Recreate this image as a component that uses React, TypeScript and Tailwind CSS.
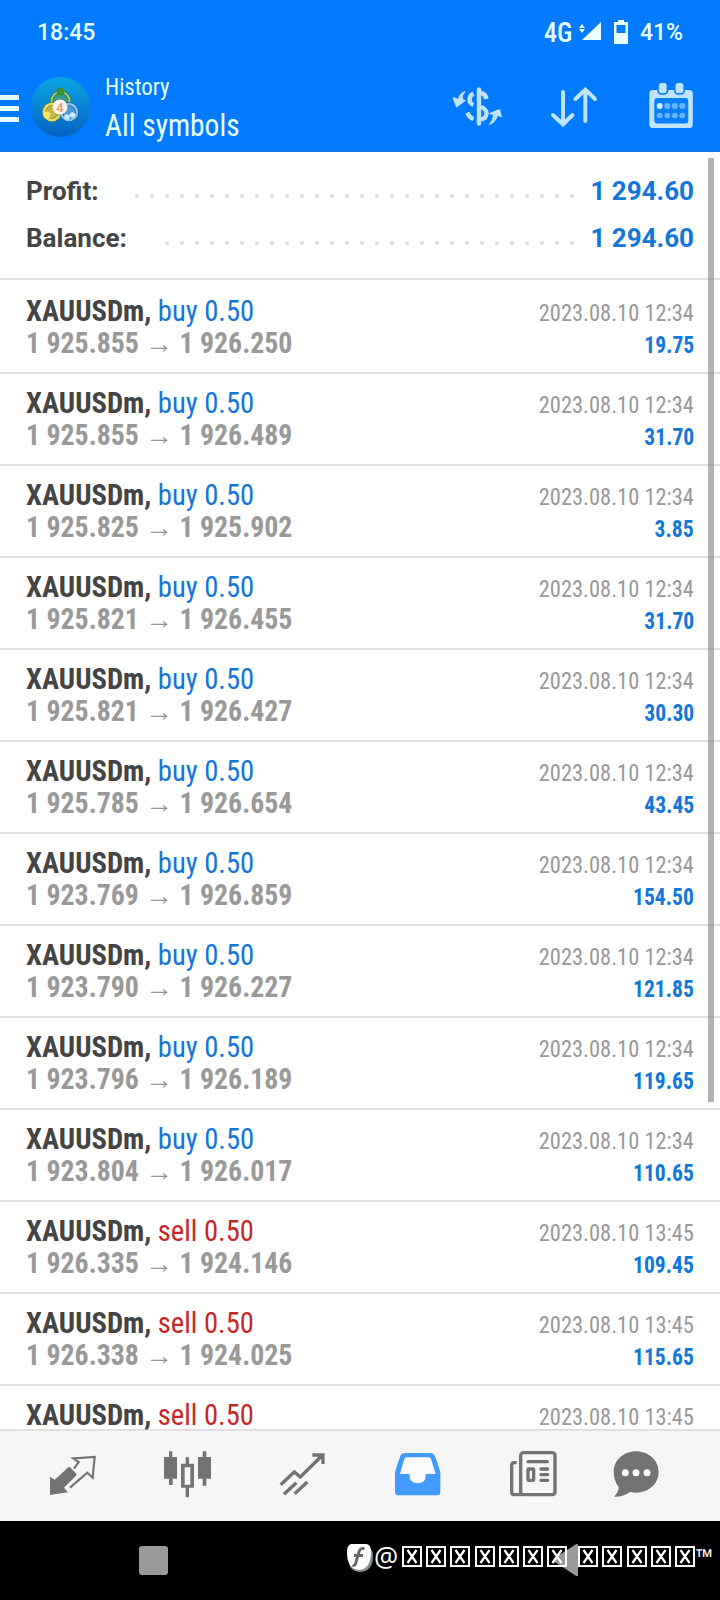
import { FunctionComponent } from "react";

type Deal = {
  side: "buy" | "sell";
  open: string;
  close: string;
  time: string;
  profit: string;
};

const deals: Deal[] = [
  { side: "buy", open: "1 925.855", close: "1 926.250", time: "2023.08.10 12:34", profit: "19.75" },
  { side: "buy", open: "1 925.855", close: "1 926.489", time: "2023.08.10 12:34", profit: "31.70" },
  { side: "buy", open: "1 925.825", close: "1 925.902", time: "2023.08.10 12:34", profit: "3.85" },
  { side: "buy", open: "1 925.821", close: "1 926.455", time: "2023.08.10 12:34", profit: "31.70" },
  { side: "buy", open: "1 925.821", close: "1 926.427", time: "2023.08.10 12:34", profit: "30.30" },
  { side: "buy", open: "1 925.785", close: "1 926.654", time: "2023.08.10 12:34", profit: "43.45" },
  { side: "buy", open: "1 923.769", close: "1 926.859", time: "2023.08.10 12:34", profit: "154.50" },
  { side: "buy", open: "1 923.790", close: "1 926.227", time: "2023.08.10 12:34", profit: "121.85" },
  { side: "buy", open: "1 923.796", close: "1 926.189", time: "2023.08.10 12:34", profit: "119.65" },
  { side: "buy", open: "1 923.804", close: "1 926.017", time: "2023.08.10 12:34", profit: "110.65" },
  { side: "sell", open: "1 926.335", close: "1 924.146", time: "2023.08.10 13:45", profit: "109.45" },
  { side: "sell", open: "1 926.338", close: "1 924.025", time: "2023.08.10 13:45", profit: "115.65" },
];

const StatusBar: FunctionComponent = () => (
  <div className="flex h-[62px] items-center justify-between px-[37px] pt-[4px] text-[23px] font-medium text-[#e8ffff]">
    <span>18:45</span>
    <div className="flex items-center">
      <span className="origin-right scale-x-[.97] text-[27px] font-stretch-condensed">4G</span>
      <svg className="mb-[2px] ml-[6px] h-[22px] w-[24px]" viewBox="0 0 24 22" fill="currentColor">
        <path d="M23 1v18H4z" />
        <path d="M4 3l3 4H1zM4 12l3-4H1z" />
      </svg>
      <svg className="mb-[3px] ml-[11px] h-[26px] w-[16px]" viewBox="0 0 16 26">
        <path d="M5 1h6v2h4v22H1V3h4z" fill="currentColor" />
        <path d="M3.500 6h9v8h-9z" fill="#007aff" />
      </svg>
      <span className="ml-[11px]">41%</span>
    </div>
  </div>
);

const Logo: FunctionComponent = () => (
  <svg className="ml-[11px] mt-[14px] h-[62px] w-[62px]" viewBox="0 0 62 62">
    <defs>
      <linearGradient id="logoBg" x1="0" y1="0" x2="0" y2="1">
        <stop offset="0" stopColor="#08a5e4" />
        <stop offset="1" stopColor="#0562c4" />
      </linearGradient>
    </defs>
    <circle cx="30.500" cy="31" r="30" fill="url(#logoBg)" />
    <circle cx="30.500" cy="25" r="9" fill="#3a9a86" stroke="#2f7d5a" strokeWidth="4" />
    <circle cx="30.500" cy="25" r="9" fill="none" stroke="#9ccf92" strokeWidth="2" />
    <circle cx="22" cy="36" r="8" fill="#c9b544" stroke="#5f8a4a" strokeWidth="4" />
    <circle cx="22" cy="36" r="8" fill="none" stroke="#efdc5c" strokeWidth="2.500" />
    <circle cx="39" cy="36" r="8" fill="#4a9ad8" stroke="#1a5f9e" strokeWidth="4" />
    <circle cx="39" cy="36" r="8" fill="none" stroke="#86c6ee" strokeWidth="2.500" />
    <circle cx="30.500" cy="15.500" r="4" fill="#3c8f3a" />
    <circle cx="17" cy="39" r="3.500" fill="#f3e36a" />
    <circle cx="37" cy="41" r="2.800" fill="#cdeaff" />
    <circle cx="42.500" cy="39" r="2.800" fill="#cdeaff" />
    <circle cx="30" cy="31" r="7.500" fill="#fff4ee" />
    <text x="30" y="36" textAnchor="middle" fontSize="13" fontWeight="600" fill="#eaa06a">
      4
    </text>
  </svg>
);

const dotXs = [659.7, 667.3, 674.8, 682.3];

const Header: FunctionComponent = () => (
  <div className="flex h-[89px] text-[#e8ffff]">
    <div className="mt-[33px] flex w-[19px] flex-col gap-[6px]">
      <div className="h-[5px] bg-current" />
      <div className="h-[5px] bg-current" />
      <div className="h-[5px] bg-current" />
    </div>
    <Logo />
    <div className="ml-[13px] flex flex-1 flex-col items-start font-stretch-condensed">
      <span className="mt-[11px] origin-left scale-x-[.95] text-[24px] leading-[28px]">History</span>
      <span className="origin-left scale-x-[.92] text-[32px] leading-[48px]">All symbols</span>
    </div>
    <div className="mr-[24px] flex pt-[20px] text-[#bfe3fb]">
      <svg className="h-[48px] w-[50px]" viewBox="452 82 50 48" fill="none" stroke="currentColor">
        <path d="M479 89.500v34" strokeWidth="4.400" strokeLinecap="round" />
        <path d="M481 93q4.500 1 5.500 6M481 107q5.500 2 5.500 6.500t-5.500 6" strokeWidth="4.400" />
        <path d="M473.500 93.500q-4 2-4 6t4 5.500M467.500 112.500q1.500 5 6 6.500" strokeWidth="4.400" />
        <path d="M465 91.500q-6 2-6.500 8l-5.500-2 3.500 9.500 9-6.500-3-1q-1-4 2.500-8z" fill="currentColor" />
        <path d="M489.500 124.500q7-3 8-9.500l4 2-2-7.500-10 4 4 1q0 5-4 10z" fill="currentColor" />
      </svg>
      <svg
        className="ml-[48px] h-[48px] w-[48px]"
        viewBox="550 82 48 48"
        fill="none"
        stroke="currentColor"
        strokeWidth="4"
        strokeLinecap="round"
      >
        <path d="M563 92v32M553 115l10 9.500 9.500-9.500M585.300 121V89.500M575.500 99l9.800-9.500 9.700 9.500" />
      </svg>
      <svg className="ml-[50px] h-[48px] w-[48px]" viewBox="648 82 48 48">
        <rect x="649.300" y="90" width="43.500" height="38" rx="3.500" fill="currentColor" />
        <rect x="654.300" y="98" width="34" height="25.500" rx="3" fill="#0a7ffb" />
        <rect x="658" y="82.300" width="9.500" height="11.700" rx="3.500" fill="currentColor" stroke="#007aff" strokeWidth="1.600" />
        <rect x="674.700" y="82.300" width="9.500" height="11.700" rx="3.500" fill="currentColor" stroke="#007aff" strokeWidth="1.600" />
        {dotXs.map((x, i) => (
          <g key={x} fill="#6db5fb">
            <circle cx={x} cy="106" r="3" fill={i === 0 ? "#d5efff" : "#6db5fb"} />
            <circle cx={x} cy="115.500" r="2.800" />
          </g>
        ))}
      </svg>
    </div>
  </div>
);

const SummaryLine: FunctionComponent<{ label: string; dots: number }> = ({ label, dots }) => (
  <div className="flex h-[47px] items-center text-[26px] font-bold">
    <span className="text-[#444]">{label}</span>
    <div className="ml-auto mr-[16px] mt-[8px] flex gap-[11px]">
      {Array.from({ length: dots }, (_, i) => (
        <div key={i} className="size-[4px] rounded-full bg-[#dcdcdc]" />
      ))}
    </div>
    <span className="text-[#1276da]">1 294.60</span>
  </div>
);

const DealTitle: FunctionComponent<{ side: Deal["side"]; time: string }> = ({ side, time }) => (
  <div className="flex h-[32px] items-baseline justify-between leading-[32px]">
    <span className="origin-left scale-x-[.986] text-[29px]">
      <b className="text-[#444]">XAUUSDm,</b>{" "}
      <span className={side === "buy" ? "text-[#1276da]" : "text-[#c62828]"}>{side} 0.50</span>
    </span>
    <span className="origin-right scale-x-[.935] text-[24px] text-[#999]">{time}</span>
  </div>
);

const DealRow: FunctionComponent<{ deal: Deal }> = ({ deal }) => (
  <div className="h-[92px] border-b-2 border-[#e0e0e0] px-[26px] pt-[13px] font-stretch-condensed">
    <DealTitle side={deal.side} time={deal.time} />
    <div className="flex h-[32px] items-baseline justify-between leading-[32px]">
      <span className="origin-left scale-x-[.959] text-[29px] font-bold text-[#999]">
        {deal.open} → {deal.close}
      </span>
      <span className="origin-right scale-x-[.937] text-[23px] font-bold text-[#1276da]">{deal.profit}</span>
    </div>
  </div>
);

const TabBar: FunctionComponent = () => (
  <div className="flex h-[92px] border-t-2 border-[#e0e0e0] bg-[#f6f6f6] pl-[48px] pt-[19px] text-[#737373]">
    <svg className="size-[48px]" viewBox="144 240 144 144">
      <path d="M150 320l14 9 42-38q3-1 6 2l17 18q2 3-1 6l-36 36 12 14-54 8z" fill="currentColor" />
      <path d="M222 296l14-20-16-11 64-4-6 62-16-15-52 45" fill="none" stroke="currentColor" strokeWidth="6.500" />
    </svg>
    <svg className="ml-[67px] size-[48px]" viewBox="489 240 144 144" fill="currentColor">
      <path d="M507 244h10v17h14v65h-13v19h-11v-19h-15v-65h15zM608 244h11v17h14v65h-14v21h-11v-21h-14v-65h14z" />
      <path
        fillRule="evenodd"
        d="M557 262h10v19h15v72h-15v29h-10v-29h-14v-72h14zM554 292v52h17v-52z"
      />
    </svg>
    <svg className="ml-[68px] size-[48px]" viewBox="837 240 144 144" fill="none" stroke="currentColor" strokeWidth="10">
      <path d="M842 344l41-38 18 15 67-66M937 255h32v27M852 373l37-35M884 371l38-35" />
    </svg>
    <svg className="ml-[67px] size-[48px] text-[#449bff]" viewBox="102 240 144 144">
      <path
        fill="currentColor"
        d="M134 249h78q9 0 13 8l14 42q2 6 2 12v56q0 9-9 9H114q-9 0-9-9v-56q0-6 2-12l14-42q4-8 13-8z"
      />
      <path fill="#fafafa" d="M140 262h66q5 0 7 5l14 45h-30v6q0 22-24 22t-24-22v-6h-29l13-45q2-5 7-5z" />
    </svg>
    <svg className="ml-[67px] size-[48px]" viewBox="447 240 144 144" fill="none" stroke="currentColor" strokeWidth="10">
      <rect x="482" y="248" width="103" height="126" rx="8" />
      <path d="M470 278h-7q-8 0-8 8v79q0 9 9 9h22" />
      <path d="M504 275h58M543 297h20M543 314h20M543 331h20" strokeLinecap="round" />
      <rect x="504" y="297" width="17" height="34" rx="2" />
    </svg>
    <svg className="ml-[56px] size-[48px]" viewBox="759 240 144 144">
      <path
        fill="currentColor"
        d="M828 244c38 0 68 27 68 62s-30 62-68 62q-10 0-18-2-20 15-48 14 14-13 14-29-15-19-15-45c0-35 29-62 67-62z"
      />
      <g fill="#fafafa">
        <circle cx="796" cy="308" r="10.500" />
        <circle cx="828" cy="308" r="10.500" />
        <circle cx="861" cy="308" r="10.500" />
      </g>
    </svg>
  </div>
);

const Tofu: FunctionComponent = () => (
  <svg className="h-[21px] w-[20px]" viewBox="0 0 20 21" fill="none" stroke="#fff">
    <rect x="1" y="1" width="18" height="19" strokeWidth="2" />
    <path d="M5.500 4l9 13M14.500 4l-9 13" strokeWidth="2.200" />
  </svg>
);

const SystemBar: FunctionComponent = () => (
  <div className="relative flex h-[79px] bg-black">
    <div className="ml-[139px] mt-[25px] size-[29px] rounded-[3px] bg-[#999]" />
    <svg className="ml-[382px] mt-[22px] h-[34px] w-[30px]" viewBox="0 0 30 34">
      <path d="M28 1.500v31q-1 1-2.500 0L4 18.500q-2-1.500 0-3L25.500 1.500q1.500-1 2.500 0z" fill="#999" />
    </svg>
    {/* watermark lies over the navigation buttons */}
    <div className="absolute left-[346px] top-[22px] flex text-white">
      <svg className="h-[30px] w-[28px]" viewBox="0 0 28 30">
        <path d="M4 5h19q4 1 4 8 0 16-14 16Q4 28 3 20z" fill="#8a8a8a" />
        <path d="M5 1h15q5 0 5 8 0 17-12 18Q1 26 1 9q0-7 4-8z" fill="#fff" />
        <path d="M18.500 6q-4-2-5.500 3l-3.500 12q-1 2-3 1.500M8 12.500h9" fill="none" stroke="#666" strokeWidth="2.800" />
      </svg>
      <span className="w-[28px] text-[27px] leading-[28px] font-['Open_Sans']">@</span>
      <div className="mt-[3px] flex gap-[4.200px]">
        {Array.from({ length: 7 }, (_, i) => (
          <Tofu key={i} />
        ))}
      </div>
      <div className="ml-[11px] mt-[3px] flex gap-[4.200px]">
        {Array.from({ length: 5 }, (_, i) => (
          <Tofu key={i} />
        ))}
      </div>
      <span className="ml-[1px] text-[22px] leading-[27px] font-semibold font-['Open_Sans']">™</span>
    </div>
  </div>
);

export default function App() {
  return (
    <div className="relative flex h-[1600px] w-[720px] flex-col overflow-hidden bg-white font-['Roboto']">
      <div className="h-[152px] border-b border-[#1670e8] bg-[#007aff]">
        <StatusBar />
        <Header />
      </div>
      <div className="h-[128px] border-b-2 border-[#e0e0e0] px-[26px] pt-[16px]">
        <SummaryLine label="Profit:" dots={30} />
        <SummaryLine label="Balance:" dots={28} />
      </div>
      <div className="h-[1149px] pt-[2px]">
        {deals.map((deal, i) => (
          <DealRow key={i} deal={deal} />
        ))}
        <div className="h-[43px] px-[26px] pt-[13px] font-stretch-condensed">
          <DealTitle side="sell" time="2023.08.10 13:45" />
        </div>
      </div>
      <TabBar />
      <SystemBar />
      <div className="absolute left-[708px] top-[158px] h-[944px] w-[5.500px] bg-[#7c7c7c]/58" />
    </div>
  );
}
